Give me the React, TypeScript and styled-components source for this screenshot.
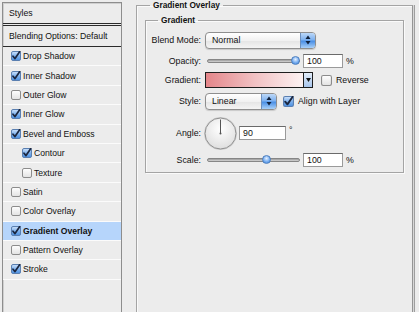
import React from "react";
import styled, { createGlobalStyle } from "styled-components";

// --- Data ---
interface StyleItem {
  name: string;
  checked: boolean;
  indent?: boolean;
  selected?: boolean;
}

const styleItems: StyleItem[] = [
  { name: "Drop Shadow", checked: true },
  { name: "Inner Shadow", checked: true },
  { name: "Outer Glow", checked: false },
  { name: "Inner Glow", checked: true },
  { name: "Bevel and Emboss", checked: true },
  { name: "Contour", checked: true, indent: true },
  { name: "Texture", checked: false, indent: true },
  { name: "Satin", checked: false },
  { name: "Color Overlay", checked: false },
  { name: "Gradient Overlay", checked: true, selected: true },
  { name: "Pattern Overlay", checked: false },
  { name: "Stroke", checked: true },
];

const opacity = 100;
const scale = 100;
const scaleMax = 150;
const sliderWidth = 93;

// --- Global ---
const GlobalStyle = createGlobalStyle`
  html, body {
    margin: 0;
    padding: 0;
    background: #ececec;
    overflow: hidden;
  }
  body {
    font-family: "Liberation Sans", Arial, sans-serif;
    color: #111;
  }
`;

// --- Styled Components ---
const Dialog = styled.div`
  display: flex;
  align-items: flex-start;
  width: 419px;
  height: 312px;
  overflow: hidden;
`;

const StylesPanel = styled.div`
  margin: 2px 0 0 2px;
  width: 120px;
  height: 330px;
  box-sizing: border-box;
  border: 1px solid #8d8d8d;
  box-shadow: inset 1px 1px 0 #cfcfcf;
  background: #ececec;
  flex-shrink: 0;
`;

const PanelHeader = styled.div<{ $double?: boolean }>`
  height: 20px;
  display: flex;
  align-items: center;
  padding-left: 6px;
  font-size: 8.7px;
  color: #111;
  border-bottom: ${(p) => (p.$double ? "3px double #2b2b2b" : "1px solid #2b2b2b")};
`;

const StyleRow = styled.div<{ $indent?: boolean; $selected?: boolean }>`
  height: 18.4px;
  display: flex;
  align-items: center;
  gap: 2px;
  padding-left: ${(p) => (p.$indent ? "19px" : "8px")};
  border-bottom: 1px solid #fbfbfb;
  background: ${(p) => (p.$selected ? "#b6d5fb" : "#ececec")};
  font-size: 8.6px;
  font-weight: ${(p) => (p.$selected ? "bold" : "normal")};
  color: #111;
`;

const GroupBox = styled.fieldset<{ $outer?: boolean }>`
  margin: 0;
  min-inline-size: 0;
  box-sizing: border-box;
  border: 1px solid #a4a4a4;
  box-shadow: inset 1px 1px 0 #fafafa, 1px 1px 0 #fafafa;
  padding: ${(p) => (p.$outer ? "5px 8px 0 8px" : "6px 0 5px 0")};
  width: ${(p) => (p.$outer ? "277px" : "auto")};
  height: ${(p) => (p.$outer ? "330px" : "auto")};
`;

const OuterGroup = styled(GroupBox)`
  margin-left: 14px;
  border-right-color: #959595;
  box-shadow: inset 1px 1px 0 #fafafa, 1px 0 0 #d8d8d8, 2px 0 0 #9e9e9e;
`;

const Legend = styled.legend<{ $offset: number }>`
  padding: 0 3px;
  margin-left: ${(p) => p.$offset}px;
  font-size: 8.3px;
  font-weight: bold;
  line-height: 10px;
  color: #111;
`;

const FieldRow = styled.div<{ $h: number; $top?: number }>`
  display: flex;
  align-items: center;
  height: ${(p) => p.$h}px;
  margin-top: ${(p) => p.$top ?? 0}px;
  font-size: 8.8px;
  color: #111;
`;

const FieldLabel = styled.span`
  width: 55px;
  text-align: right;
  margin-right: 4px;
  flex-shrink: 0;
`;

const Popup = styled.div<{ $w: number }>`
  width: ${(p) => p.$w}px;
  height: 17px;
  box-sizing: border-box;
  display: flex;
  border: 1px solid #8e8e8e;
  border-radius: 4px;
  overflow: hidden;
  background: linear-gradient(#ffffff, #f1f1f1 50%, #e4e4e4 51%, #f4f4f4);
  box-shadow: 0 1px 1px rgba(0, 0, 0, 0.15);
`;

const PopupText = styled.span`
  flex: 1;
  padding-left: 6px;
  line-height: 15px;
`;

const Stepper = styled.span`
  width: 14px;
  display: flex;
  align-items: center;
  justify-content: center;
  border-left: 1px solid #6d8fbd;
  background: linear-gradient(#bcd8f8, #7eb1ef 45%, #4b90e6 55%, #a9d0f8);
`;

const Slider = styled.div`
  position: relative;
  width: ${sliderWidth}px;
  height: 14px;
  margin-left: 2px;
  flex-shrink: 0;
`;

const Track = styled.div`
  margin-top: 5px;
  height: 4px;
  box-sizing: border-box;
  border-radius: 2px;
  border: 1px solid #868686;
  background: linear-gradient(#9a9a9a, #d6d6d6);
`;

const Thumb = styled.div`
  position: absolute;
  top: 2px;
  width: 9px;
  height: 9px;
  border-radius: 50%;
  border: 1px solid #4d7fbf;
  box-sizing: border-box;
  background: radial-gradient(circle at 50% 35%, #e6f1ff, #78aef0 55%, #3d84dc);
`;

const TextInput = styled.div<{ $w: number }>`
  width: ${(p) => p.$w}px;
  height: 14px;
  box-sizing: border-box;
  margin-left: 3px;
  padding-left: 3px;
  border: 1px solid #9a9a9a;
  border-top-color: #6a6a6a;
  background: #fff;
  line-height: 12px;
  font-size: 8.8px;
  flex-shrink: 0;
`;

const Unit = styled.span<{ $raise?: boolean }>`
  margin-left: 3px;
  align-self: ${(p) => (p.$raise ? "flex-start" : "center")};
  margin-top: ${(p) => (p.$raise ? "9px" : "0")};
`;

const GradientSwatch = styled.div`
  width: 99px;
  height: 16px;
  box-sizing: border-box;
  border: 1px solid #1e1e1e;
  background: linear-gradient(to right, #e4868a, #f1c1c3 50%, #fdf2f2);
`;

const SwatchArrow = styled.div`
  width: 9px;
  height: 16px;
  box-sizing: border-box;
  border: 1px solid #1e1e1e;
  border-left: none;
  display: flex;
  align-items: center;
  justify-content: center;
  background: linear-gradient(#e3edf9, #a8c5ec);
`;

const CheckLabel = styled.span<{ $gap: number }>`
  display: flex;
  align-items: center;
  gap: 4px;
  margin-left: ${(p) => p.$gap}px;
`;

// --- Drawings ---
const CheckBox: React.FC<{ checked: boolean; size?: number }> = ({ checked, size = 10 }) => (
  <svg width={size} height={size} viewBox="0 0 10 10" style={{ flexShrink: 0 }}>
    <defs>
      <linearGradient id="cbOn" x1="0" y1="0" x2="0" y2="1">
        <stop offset="0" stopColor="#cfe3fb" />
        <stop offset="0.5" stopColor="#7fb2ee" />
        <stop offset="1" stopColor="#4b8fe0" />
      </linearGradient>
      <linearGradient id="cbOff" x1="0" y1="0" x2="0" y2="1">
        <stop offset="0" stopColor="#ffffff" />
        <stop offset="1" stopColor="#e2e2e2" />
      </linearGradient>
    </defs>
    <rect
      x="0.5"
      y="0.5"
      width="9"
      height="9"
      rx="1.5"
      fill={checked ? "url(#cbOn)" : "url(#cbOff)"}
      stroke={checked ? "#5a7fb0" : "#8c8c8c"}
    />
    {checked && (
      <path d="M2 5.2 L4 7.6 L8.8 0.6" fill="none" stroke="#1b2740" strokeWidth="1.7" strokeLinecap="round" strokeLinejoin="round" />
    )}
  </svg>
);

const UpDown = () => (
  <svg width="6" height="10" viewBox="0 0 6 10">
    <path d="M3 0.5 L5.5 4 L0.5 4 Z" fill="#10203a" />
    <path d="M3 9.5 L5.5 6 L0.5 6 Z" fill="#10203a" />
  </svg>
);

const DownArrow = () => (
  <svg width="5" height="4" viewBox="0 0 5 4">
    <path d="M0 0 L5 0 L2.5 4 Z" fill="#111" />
  </svg>
);

const AngleDial: React.FC<{ angle: number }> = ({ angle }) => {
  const r = 14;
  const rad = (angle * Math.PI) / 180;
  return (
    <svg width="35" height="35" viewBox="0 0 35 35" style={{ marginLeft: -2, flexShrink: 0 }}>
      <defs>
        <radialGradient id="dialFill" cx="0.5" cy="0.35" r="0.7">
          <stop offset="0" stopColor="#ffffff" />
          <stop offset="1" stopColor="#dcdcdc" />
        </radialGradient>
      </defs>
      <circle cx="17.5" cy="17.5" r="16.5" fill="#d2d2d2" />
      <circle cx="17.5" cy="17.5" r="15.5" fill="url(#dialFill)" stroke="#8f8f8f" />
      <line
        x1="17.5"
        y1="17.5"
        x2={17.5 + r * Math.cos(rad)}
        y2={17.5 - r * Math.sin(rad)}
        stroke="#555"
        strokeWidth="1"
      />
      <circle cx="17.5" cy="17.5" r="1" fill="#555" />
    </svg>
  );
};

const RangeSlider: React.FC<{ value: number; max: number }> = ({ value, max }) => (
  <Slider>
    <Track />
    <Thumb style={{ left: Math.round((value / max) * (sliderWidth - 6)) - 3 }} />
  </Slider>
);

// --- Main Component ---
const App: React.FC = () => {
  return (
    <>
      <GlobalStyle />
      <Dialog>
        <StylesPanel>
          <PanelHeader $double>Styles</PanelHeader>
          <PanelHeader>Blending Options: Default</PanelHeader>
          {styleItems.map((item) => (
            <StyleRow key={item.name} $indent={item.indent} $selected={item.selected}>
              <CheckBox checked={item.checked} />
              {item.name}
            </StyleRow>
          ))}
        </StylesPanel>

        <OuterGroup $outer>
          <Legend $offset={5}>Gradient Overlay</Legend>
          <GroupBox>
            <Legend $offset={12}>Gradient</Legend>

            <FieldRow $h={18}>
              <FieldLabel>Blend Mode:</FieldLabel>
              <Popup $w={111}>
                <PopupText>Normal</PopupText>
                <Stepper>
                  <UpDown />
                </Stepper>
              </Popup>
            </FieldRow>

            <FieldRow $h={15} $top={4}>
              <FieldLabel>Opacity:</FieldLabel>
              <RangeSlider value={opacity} max={100} />
              <TextInput $w={40}>{opacity}</TextInput>
              <Unit>%</Unit>
            </FieldRow>

            <FieldRow $h={18} $top={3}>
              <FieldLabel>Gradient:</FieldLabel>
              <GradientSwatch />
              <SwatchArrow>
                <DownArrow />
              </SwatchArrow>
              <CheckLabel $gap={8}>
                <CheckBox checked={false} size={11} />
                Reverse
              </CheckLabel>
            </FieldRow>

            <FieldRow $h={18} $top={3}>
              <FieldLabel>Style:</FieldLabel>
              <Popup $w={72}>
                <PopupText>Linear</PopupText>
                <Stepper>
                  <UpDown />
                </Stepper>
              </Popup>
              <CheckLabel $gap={6}>
                <CheckBox checked size={11} />
                Align with Layer
              </CheckLabel>
            </FieldRow>

            <FieldRow $h={34} $top={6}>
              <FieldLabel>Angle:</FieldLabel>
              <AngleDial angle={90} />
              <TextInput $w={47} style={{ marginLeft: 1 }}>
                90
              </TextInput>
              <Unit $raise>°</Unit>
            </FieldRow>

            <FieldRow $h={14} $top={3}>
              <FieldLabel>Scale:</FieldLabel>
              <RangeSlider value={scale} max={scaleMax} />
              <TextInput $w={40}>{scale}</TextInput>
              <Unit>%</Unit>
            </FieldRow>
          </GroupBox>
        </OuterGroup>
      </Dialog>
    </>
  );
};

export default App;
